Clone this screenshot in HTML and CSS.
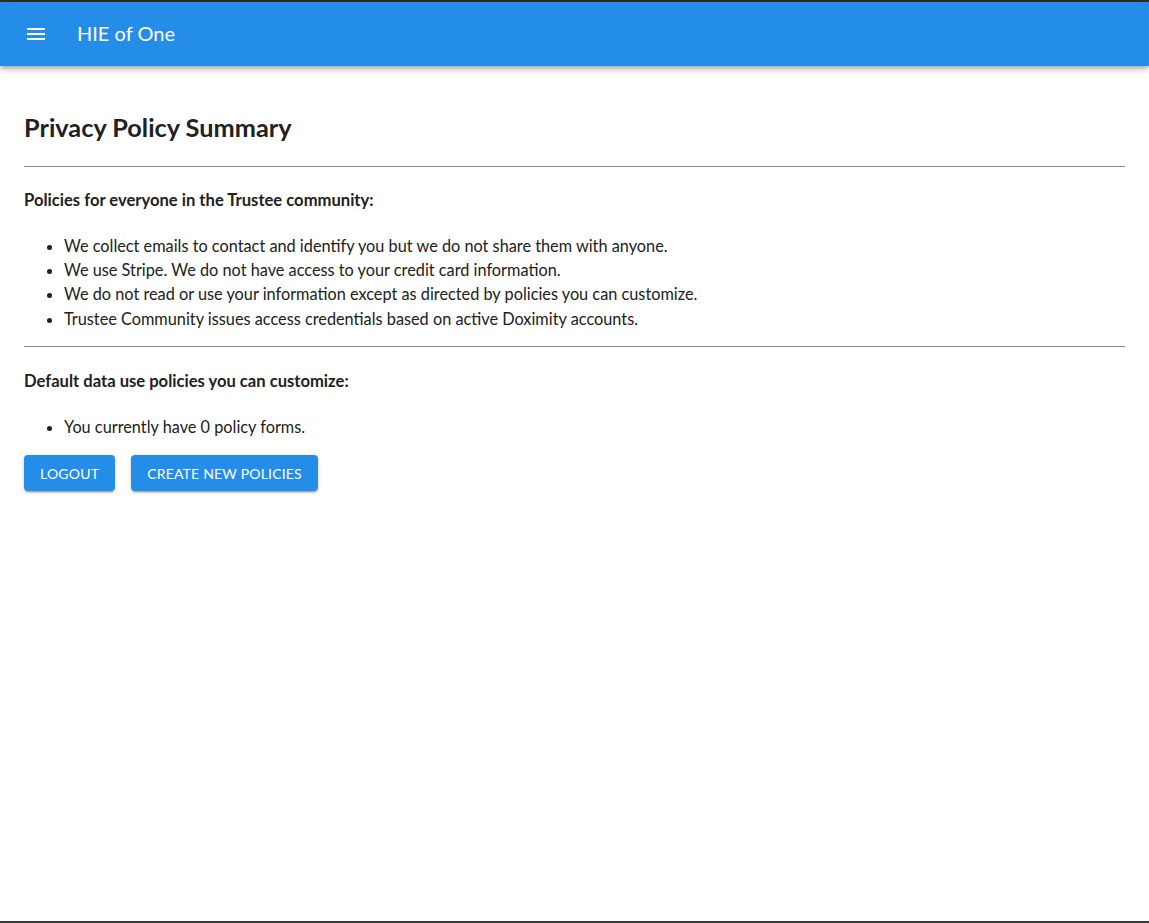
FILE: index.html
```html
<!DOCTYPE html>
<html lang="en">
<head>
<meta charset="utf-8">
<title>HIE of One</title>
<link rel="stylesheet" href="styles.css">
</head>
<body>
<div class="frame">
  <header class="appbar">
    <button class="menu-btn" aria-label="menu">
      <svg width="18" height="12" viewBox="0 0 18 12"><rect x="0" y="0" width="18" height="2" fill="#fff"/><rect x="0" y="5" width="18" height="2" fill="#fff"/><rect x="0" y="10" width="18" height="2" fill="#fff"/></svg>
    </button>
    <div class="app-title">HIE of One</div>
  </header>
  <main class="content">
    <h2 class="page-title">Privacy Policy Summary</h2>
    <hr class="divider">
    <p class="section-title">Policies for everyone in the Trustee community:</p>
    <ul class="list">
      <li>We collect emails to contact and identify you but we do not share them with anyone.</li>
      <li>We use Stripe. We do not have access to your credit card information.</li>
      <li>We do not read or use your information except as directed by policies you can customize.</li>
      <li>Trustee Community issues access credentials based on active Doximity accounts.</li>
    </ul>
    <hr class="divider">
    <p class="section-title">Default data use policies you can customize:</p>
    <ul class="list">
      <li>You currently have 0 policy forms.</li>
    </ul>
    <div class="actions">
      <button class="btn">LOGOUT</button>
      <button class="btn">CREATE NEW POLICIES</button>
    </div>
  </main>
</div>
</body>
</html>
```
FILE: styles.css
```css
html, body {
  margin: 0;
  padding: 0;
  height: 100%;
}
body {
  font-family: "Lato", "Noto Sans", sans-serif;
  color: #212121;
  background: #fff;
}
.frame {
  box-sizing: border-box;
  height: 923px;
  border-top: 2px solid #2e2e2e;
  border-bottom: 2px solid #3a3a3a;
  display: flex;
  flex-direction: column;
}
.appbar {
  height: 64px;
  background: #238de8;
  display: flex;
  align-items: center;
  padding: 0 0 3px 27px;
  box-sizing: border-box;
  box-shadow: 0 2px 4px -1px rgba(0,0,0,0.2), 0 4px 5px 0 rgba(0,0,0,0.14), 0 1px 10px 0 rgba(0,0,0,0.12);
  color: #fff;
  flex-shrink: 0;
}
.menu-btn {
  background: none;
  border: 0;
  padding: 0;
  width: 18px;
  height: 12px;
  display: flex;
  margin-top: 3px;
}
.app-title {
  margin-left: 32px;
  font-size: 20px;
  font-weight: 400;
}
.content {
  padding: 24px 24px;
}
.page-title {
  font-size: 25.3px;
  font-weight: 700;
  margin: 23px 0 25px;
  line-height: 28px;
}
.divider {
  border: 0;
  border-top: 1px solid #8a8a8a;
  margin: 0;
}
.section-title {
  font-size: 16.6px;
  font-weight: 700;
  margin: 23px 0 0;
  line-height: 20px;
}
.list {
  margin: 24px 0 0;
  padding-left: 40px;
  font-size: 16.3px;
  line-height: 24.2px;
}
.list + .divider { margin-top: 15px; }
.divider + .section-title { margin-top: 23px; }
.list + .divider + .section-title { margin-top: 24px; }
.actions {
  display: flex;
  gap: 16px;
  margin-top: 16px;
}
.btn {
  font-family: inherit;
  height: 36px;
  padding: 0 16px;
  background: #238de8;
  color: #fff;
  border: 0;
  border-radius: 4px;
  font-size: 14px;
  letter-spacing: 0.2px;
  box-shadow: 0 3px 1px -2px rgba(0,0,0,0.2), 0 2px 2px 0 rgba(0,0,0,0.14), 0 1px 5px 0 rgba(0,0,0,0.12);
}
```
